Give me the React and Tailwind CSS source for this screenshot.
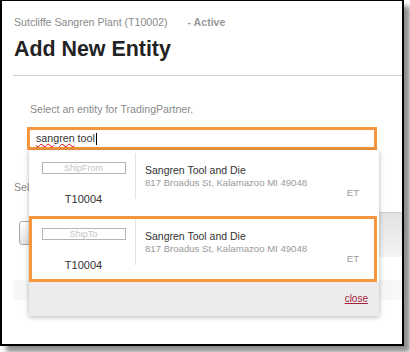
import React from "react";

function Row({ badge, selected }) {
  return (
    <div
      className={
        "flex h-[66px] mr-[2px] border-[3px] " +
        (selected ? "border-[#f7963e]" : "border-transparent")
      }
    >
      <div className="w-[103px] flex flex-col items-center pt-[9px]">
        <div className="w-[84px] h-[12px] border border-[#b5b5b5] flex items-center justify-center text-[9px] leading-none text-[#c4c4c4]">
          {badge}
        </div>
        <div className="mt-[18px] text-[11px] leading-[14px] text-[#333]">T10004</div>
      </div>
      <div className="w-px h-[46px] bg-[#e2e2e2]" />
      <div className="flex-1 flex pl-[9px] pt-[10px]">
        <div className="flex-1 flex flex-col">
          <div className="text-[10.5px] leading-[14px] text-[#333]">Sangren Tool and Die</div>
          <div className="text-[9.6px] leading-[12px] text-[#9a9a9a]">
            817 Broadus St, Kalamazoo MI 49048
          </div>
        </div>
        <div className="pt-[24px] pr-[15px] text-[9.6px] leading-[12px] text-[#9a9a9a]">ET</div>
      </div>
    </div>
  );
}

export default function App() {
  return (
    <div
      className="w-[410px] h-[352px] bg-white overflow-hidden"
      style={{ fontFamily: '"Liberation Sans", Arial, sans-serif' }}
    >
      <div className="relative w-[404px] h-[346px] bg-white border-l-2 border-r-2 border-b-2 border-t border-black shadow-[6px_6px_5px_rgba(0,0,0,0.45)] overflow-hidden">
        <div className="mt-[14px] pl-[12px] text-[10.6px] leading-[14px] text-[#8a8a8a] whitespace-nowrap">
          Sutcliffe Sangren Plant (T10002)
          <span className="ml-[20px] font-bold text-[#999]">- Active</span>
        </div>
        <div className="mt-[8px] pl-[12px] text-[21.4px] leading-[24px] font-bold text-[#222]">
          Add New Entity
        </div>
        <div className="mt-[14px] ml-[11px] h-px bg-[#cfcfcf]" />
        <div className="mt-[26px] pl-[28px] text-[10.6px] leading-[14px] text-[#8a8a8a]">
          Select an entity for TradingPartner.
        </div>
        <div className="mt-[11px] ml-[25px] w-[350px] h-[23px] border-[3px] border-[#f7963e] flex items-center pl-[6px] text-[10.7px] text-[#333]">
          <span className="underline decoration-wavy decoration-red-600 decoration-1 underline-offset-[1px]">
            sangren
          </span>
          <span>&nbsp;tool</span>
          <span className="ml-px w-px h-[12px] bg-black" />
        </div>
        <div className="mt-[30px] pl-[12px] text-[10.6px] leading-[14px] text-[#8a8a8a]">
          Select a location
        </div>
        <div className="mt-[18px] flex items-start h-[45px]">
          <div className="mt-[9px] ml-[17px] w-[70px] h-[24px] rounded-[3px] border border-[#aaa] bg-gradient-to-b from-white to-[#e2e2e2]" />
          <div className="ml-auto w-[140px] h-[45px] border-t border-[#cfcfcf] bg-gradient-to-b from-[#e3e3e3] to-[#f3f3f3]" />
        </div>
        <div className="mt-[23px] ml-[11px] h-[20px] bg-[#f7f7f7]" />

        <div className="absolute left-[27px] top-[149px] w-[350px] h-[166px] bg-white shadow-[0_1px_5px_rgba(0,0,0,0.3)] flex flex-col">
          <Row badge="ShipFrom" />
          <Row badge="ShipTo" selected />
          <div className="flex-1 bg-[#ececec] flex items-center justify-end pr-[11px]">
            <span className="text-[10px] leading-[12px] text-[#a3233a] underline">close</span>
          </div>
        </div>
      </div>
    </div>
  );
}
